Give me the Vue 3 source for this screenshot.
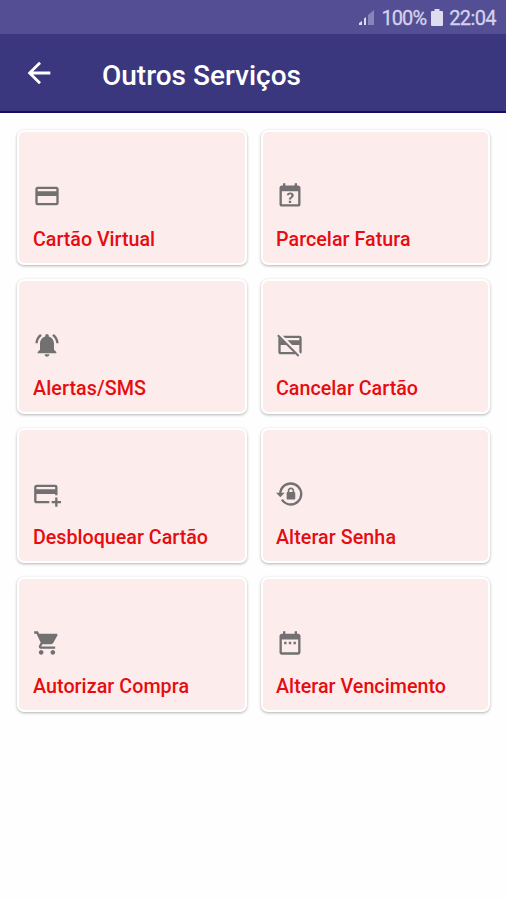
<script setup>
const services = [
  { label: 'Cartão Virtual', width: 122, icon: 'M20,8H4V6H20M20,18H4V12H20M20,4H4C2.89,4 2,4.89 2,6V18A2,2 0 0,0 4,20H20A2,2 0 0,0 22,18V6C22,4.89 21.1,4 20,4Z' },
  { label: 'Parcelar Fatura', width: 134.5, icon: 'M6 1V3H5C3.89 3 3 3.89 3 5V19C3 20.1 3.89 21 5 21H19C20.1 21 21 20.1 21 19V5C21 3.89 20.1 3 19 3H18V1H16V3H8V1H6M5 8H19V19H5V8M12.19 9C11.32 9 10.62 9.2 10.08 9.59C9.56 10 9.3 10.57 9.31 11.36L9.32 11.39H11.25C11.26 11.09 11.35 10.86 11.53 10.7C11.71 10.55 11.93 10.47 12.19 10.47C12.5 10.47 12.76 10.57 12.94 10.75C13.12 10.94 13.2 11.2 13.2 11.5C13.2 11.82 13.13 12.09 12.97 12.32C12.83 12.55 12.62 12.75 12.36 12.91C11.85 13.25 11.5 13.55 11.31 13.82C11.11 14.08 11 14.5 11 15H13C13 14.69 13.04 14.44 13.13 14.26C13.22 14.08 13.39 13.9 13.64 13.74C14.09 13.5 14.46 13.21 14.75 12.81C15.04 12.41 15.19 12 15.19 11.5C15.19 10.74 14.92 10.13 14.38 9.68C13.85 9.23 13.12 9 12.19 9M11 16V18H13V16H11Z' },
  { label: 'Alertas/SMS', width: 113, icon: 'M7.58 4.08L6.15 2.65C3.75 4.48 2.17 7.3 2.03 10.5h2c.15-2.65 1.51-4.97 3.55-6.42zm12.39 6.42h2c-.15-3.2-1.73-6.02-4.12-7.85l-1.42 1.43c2.02 1.45 3.39 3.77 3.54 6.42zM18 11c0-3.07-1.64-5.64-4.5-6.32V4c0-.83-.67-1.5-1.5-1.5s-1.5.67-1.5 1.5v.68C7.63 5.36 6 7.92 6 11v5l-2 2v1h16v-1l-2-2v-5zm-6 11c.14 0 .27-.01.4-.04.65-.14 1.18-.58 1.44-1.18.1-.24.15-.5.15-.78h-4c.01 1.1.9 2 2.01 2z' },
  { label: 'Cancelar Cartão', width: 142, icon: 'M0.93,4.2L2.21,2.93L20,20.72L18.73,22L16.73,20H4C2.89,20 2,19.1 2,18V6C2,5.78 2.04,5.57 2.11,5.38L0.93,4.2M20,8V6H7.82L5.82,4H20A2,2 0 0,1 22,6V18C22,18.6 21.74,19.13 21.32,19.5L19.82,18H20V12H13.82L9.82,8H20M4,8H4.73L4,7.27V8M4,12V18H14.73L8.73,12H4Z' },
  { label: 'Desbloquear Cartão', width: 175, icon: 'M21,18H24V20H21V23H19V20H16V18H19V15H21V18M19,8V6H3V8H19M19,12H3V18H14V20H3C1.89,20 1,19.1 1,18V6C1,4.89 1.89,4 3,4H19A2,2 0 0,1 21,6V13H19V12Z' },
  { label: 'Alterar Senha', width: 120, icon: 'M12.63,2C18.16,2 22.64,6.5 22.64,12C22.64,17.5 18.16,22 12.63,22C9.12,22 6.05,20.18 4.26,17.43L5.84,16.18C7.25,18.47 9.76,20 12.64,20A8,8 0 0,0 20.64,12A8,8 0 0,0 12.64,4C8.56,4 5.2,7.06 4.71,11H7.47L3.73,14.73L0,11H2.69C3.19,5.95 7.45,2 12.63,2M15.59,10.24C16.09,10.25 16.5,10.65 16.5,11.16V15.77C16.5,16.27 16.09,16.69 15.58,16.69H10.05C9.54,16.69 9.13,16.27 9.13,15.77V11.16C9.13,10.65 9.54,10.25 10.04,10.24V9.23C10.04,7.7 11.29,6.46 12.81,6.46C14.34,6.46 15.59,7.7 15.59,9.23V10.24M12.81,7.86C12.06,7.86 11.44,8.47 11.44,9.23V10.24H14.19V9.23C14.19,8.47 13.57,7.86 12.81,7.86Z' },
  { label: 'Autorizar Compra', width: 156, icon: 'M7 18c-1.1 0-1.99.9-1.99 2S5.9 22 7 22s2-.9 2-2-.9-2-2-2zM1 2v2h2l3.6 7.59-1.35 2.45c-.16.28-.25.61-.25.96 0 1.1.9 2 2 2h12v-2H7.42c-.14 0-.25-.11-.25-.25l.03-.12.9-1.63h7.45c.75 0 1.41-.41 1.75-1.03l3.58-6.49c.08-.14.12-.31.12-.48 0-.55-.45-1-1-1H5.21l-.94-2H1zm16 16c-1.1 0-1.99.9-1.99 2s.89 2 1.99 2 2-.9 2-2-.9-2-2-2z' },
  { label: 'Alterar Vencimento', width: 170, icon: 'M6 2V4H5C3.9 4 3 4.9 3 6V20C3 21.1 3.9 22 5 22H19C20.1 22 21 21.1 21 20V6C21 4.9 20.1 4 19 4H18V2H16V4H8V2H6ZM5 9H19V20H5V9ZM7 11V13H9V11H7ZM11 11V13H13V11H11ZM15 11V13H17V11H15Z' },
]
</script>

<template>
  <div class="screen">
    <div class="status">
      <svg class="signal" viewBox="0 0 17 16" width="17" height="16">
        <path d="M1 15V13L4 11V15ZM6 15V8.5L8 7V15Z" fill="#dcdaf0" />
        <path d="M10 15V5L16 0V15Z" fill="#8883bd" />
      </svg>
      <span class="percent">100%</span>
      <svg class="battery" viewBox="0 0 12 17" width="12" height="17">
        <path d="M3.5 0H8.5V2H11Q12 2 12 3V16Q12 17 11 17H1Q0 17 0 16V3Q0 2 1 2H3.5Z" fill="#dddcf1" />
      </svg>
      <span class="clock">22:04</span>
    </div>
    <header class="bar">
      <svg class="back" viewBox="0 0 24 24">
        <path d="M20 11H7.83l5.59-5.59L12 4l-8 8 8 8 1.41-1.41L7.83 13H20v-2z" fill="#fff" />
      </svg>
      <h1>Outros Serviços</h1>
    </header>
    <main class="grid">
      <div v-for="s in services" :key="s.label" class="card">
        <svg class="icon" viewBox="0 0 24 24"><path :d="s.icon" fill-rule="evenodd" /></svg>
        <svg class="label" :width="s.width + 4" height="28">
          <text x="0" y="20" :textLength="s.width" lengthAdjust="spacing">{{ s.label }}</text>
        </svg>
      </div>
    </main>
  </div>
</template>

<style>
body {
  background: #fefefe;
}
</style>

<style scoped>
.screen {
  height: 900px;
  background: #fefefe;
  font-family: Roboto, sans-serif;
  overflow: hidden;
}
.status {
  height: 34px;
  box-sizing: border-box;
  padding: 1px 10px 0 0;
  display: flex;
  align-items: center;
  justify-content: flex-end;
  background: #544f94;
  color: #d4d2ec;
  font-size: 20px;
  line-height: 34px;
}
.signal {
  margin-right: 6px;
}
.battery {
  margin: 0 6px 0 5px;
}
.percent {
  letter-spacing: -0.9px;
  -webkit-text-stroke: 0.3px #d4d2ec;
}
.clock {
  letter-spacing: -0.6px;
  -webkit-text-stroke: 0.3px #d4d2ec;
}
.bar {
  height: 79px;
  box-sizing: border-box;
  display: flex;
  align-items: center;
  padding: 0 0 0 22px;
  background: #3b377f;
  border-bottom: 2px solid #140e67;
}
.back {
  width: 34px;
  height: 34px;
}
h1 {
  margin: 7px 0 0 46px;
  color: #fff;
  font-size: 28px;
  font-weight: 500;
  line-height: 36px;
}
.grid {
  display: grid;
  grid-template-columns: 229.5px 229.5px;
  grid-auto-rows: 135px;
  gap: 14px;
  padding: 17px 0 0 17px;
}
.card {
  box-sizing: border-box;
  display: flex;
  flex-direction: column;
  align-items: flex-start;
  padding: 49.5px 0 0 13.5px;
  background: #fdecec;
  border: 2px solid #fff;
  border-radius: 7px;
  box-shadow: 0 1px 3px rgba(0, 0, 0, 0.3);
}
.icon {
  width: 28px;
  height: 28px;
  fill: #727070;
}
.label {
  margin-top: 16.5px;
  overflow: visible;
  font-size: 19.7px;
  font-weight: 500;
  fill: #e60c10;
}
</style>
